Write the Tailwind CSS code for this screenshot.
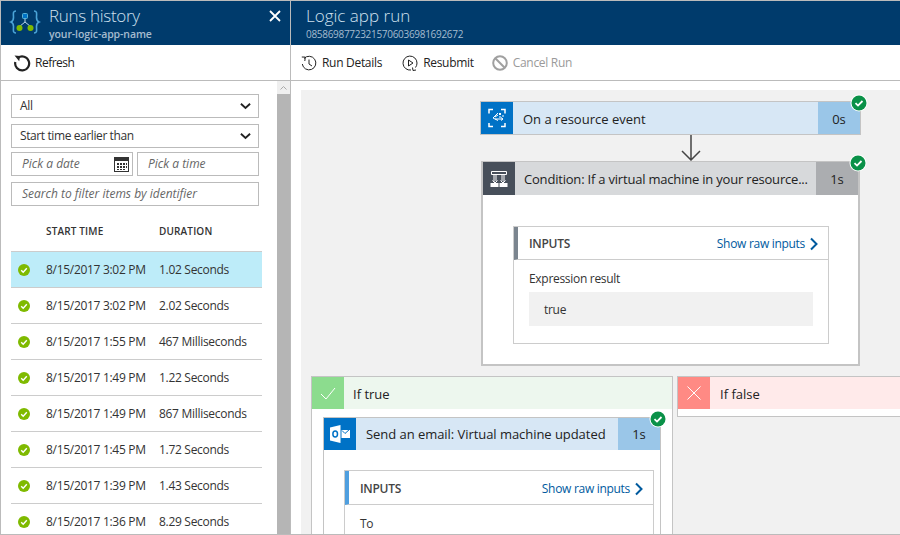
<!DOCTYPE html>
<html lang="en">
<head>
    <meta charset="UTF-8">
    <title>Logic app run</title>
    <script src="https://cdn.jsdelivr.net/npm/@tailwindcss/browser@4"></script>
</head>
<body class="w-[900px] h-[535px] overflow-hidden bg-white font-['Open_Sans',sans-serif] text-[12px] tracking-[-0.3px] text-[#333]">

    <svg class="hidden">
        <symbol id="green-check" viewBox="0 0 14 14">
            <circle cx="7" cy="7" r="6" fill="#7fba00"/>
            <path d="M4.2 7.2l2 2 3.6-4" fill="none" stroke="#fff" stroke-width="1.4"/>
        </symbol>
        <symbol id="badge" viewBox="0 0 18 18">
            <circle cx="9" cy="9" r="8.5" fill="#fff"/>
            <circle cx="9" cy="9" r="7.5" fill="#0a9148"/>
            <path d="M5.5 9.2l2.5 2.4 4.5-4.6" fill="none" stroke="#fff" stroke-width="1.8"/>
        </symbol>
        <symbol id="chevron" viewBox="0 0 10 14">
            <path d="M2 1.5L7.5 7L2 12.5" fill="none" stroke="#005a9e" stroke-width="2"/>
        </symbol>
        <symbol id="select-arrow" viewBox="0 0 12 8">
            <path d="M1 1.5L6 6.2l5-4.7" fill="none" stroke="#222" stroke-width="2"/>
        </symbol>
    </svg>

    <div class="w-[900px] h-[535px] flex border-t border-l border-b border-[#bbb]">

        <!-- Runs history blade -->
        <div class="w-[290px] h-full shrink-0 flex flex-col border-r border-[#bbb]">
            <header class="h-[44px] shrink-0 bg-[#003b6c] flex items-start pl-[8px] pr-[9px]">
                <svg class="w-[32px] h-[24px] mt-[9px] shrink-0" viewBox="0 0 32 24" fill="none">
                    <path d="M7 1C3.500 1 4.500 4 4.500 7.500c0 2.800-.8 3.800-2.500 4.500 1.700.7 2.500 1.700 2.500 4.500C4.500 20 3.500 23 7 23" stroke="#4ba5d8" stroke-width="1.600"/>
                    <path d="M25 1c3.500 0 2.500 3 2.500 6.500 0 2.800.8 3.800 2.500 4.500-1.700.7-2.500 1.700-2.500 4.500C27.500 20 28.500 23 25 23" stroke="#4ba5d8" stroke-width="1.600"/>
                    <path d="M16 8v4l-5.500 4.500M16 12l5.500 4.500" stroke="#b9d6ea" stroke-width="1"/>
                    <rect x="13.500" y="3.500" width="5" height="5" rx="1" fill="#0072c6" stroke="#59b4d9"/>
                    <circle cx="10.500" cy="18" r="3" fill="#7fba00"/>
                    <circle cx="21.500" cy="18" r="3" fill="#7fba00"/>
                </svg>
                <div class="ml-[8px] grow pt-[3px]">
                    <div class="text-[17px] leading-[24px] text-[#cfe0ee] font-light">Runs history</div>
                    <div class="text-[10.5px] leading-[12px] tracking-[-0.1px] font-semibold text-[#a5bccf]">your-logic-app-name</div>
                </div>
                <svg class="w-[12px] h-[12px] mt-[9px]" viewBox="0 0 12 12"><path d="M1 1l10 10M11 1L1 11" stroke="#fff" stroke-width="1.800"/></svg>
            </header>

            <div class="h-[36px] shrink-0 flex items-center pl-[12px] gap-[4px] border-b border-[#bbb] text-[#222]">
                <svg class="w-[18px] h-[18px]" viewBox="0 0 18 18" fill="none">
                    <path d="M5 3.800A7 7 0 1 1 2.300 8" stroke="#222" stroke-width="2.200"/>
                    <path d="M1.500 1.500l5.500.6-.8 5.200z" fill="#222"/>
                </svg>
                <span class="tracking-[-0.5px]">Refresh</span>
            </div>

            <div class="grow min-h-0 flex overflow-hidden">
                <div class="w-[276px] shrink-0 pl-[10px]">
                    <div class="mt-[13px] w-[248px] h-[24px] border border-[#bbb] flex items-center justify-between pl-[8px] pr-[7px]">
                        <span>All</span>
                        <svg class="w-[11px] h-[8px]"><use href="#select-arrow"/></svg>
                    </div>
                    <div class="mt-[6px] w-[248px] h-[24px] border border-[#bbb] flex items-center justify-between pl-[8px] pr-[7px]">
                        <span class="tracking-[-0.4px]">Start time earlier than</span>
                        <svg class="w-[11px] h-[8px]"><use href="#select-arrow"/></svg>
                    </div>
                    <div class="mt-[4px] w-[248px] flex gap-[4px]">
                        <div class="w-[122px] h-[24px] border border-[#bbb] flex items-center justify-between pl-[10px] pr-[3px] italic tracking-normal text-[#666]">
                            <span>Pick a date</span>
                            <svg class="w-[15px] h-[15px]" viewBox="0 0 15 15">
                                <rect x="0.500" y="0.500" width="14" height="14" fill="#fff" stroke="#333"/>
                                <rect x="0" y="0" width="15" height="4" fill="#333"/>
                                <path d="M3 6h2v2H3zM6 6h2v2H6zM9 6h2v2H9zM12 6h1v2h-1zM3 9h2v2H3zM6 9h2v2H6zM9 9h2v2H9zM12 9h1v2h-1zM3 12h2v1H3zM6 12h2v1H6zM9 12h2v1H9z" fill="#333"/>
                            </svg>
                        </div>
                        <div class="w-[122px] h-[24px] border border-[#bbb] flex items-center pl-[10px] italic tracking-normal text-[#666]">Pick a time</div>
                    </div>
                    <div class="mt-[6px] w-[248px] h-[24px] border border-[#bbb] flex items-center pl-[10px] italic tracking-normal text-[#666]">Search to filter items by identifier</div>

                    <div class="mt-[15px] w-[251px] h-[30px] flex text-[10px] tracking-[0.15px] font-semibold text-[#333] items-start pt-[3px]">
                        <span class="ml-[35px] w-[113px]">START TIME</span>
                        <span>DURATION</span>
                    </div>

                    <div class="w-[251px] border-t border-[#ccc]">
                        <div class="h-[36px] flex items-center border-b border-[#ccc] bg-[#bdecf9]">
                            <svg class="w-[14px] h-[14px] ml-[6px]"><use href="#green-check"/></svg>
                            <span class="ml-[15px] w-[113px]">8/15/2017 3:02 PM</span><span>1.02 Seconds</span>
                        </div>
                        <div class="h-[36px] flex items-center border-b border-[#ccc]">
                            <svg class="w-[14px] h-[14px] ml-[6px]"><use href="#green-check"/></svg>
                            <span class="ml-[15px] w-[113px]">8/15/2017 3:02 PM</span><span>2.02 Seconds</span>
                        </div>
                        <div class="h-[36px] flex items-center border-b border-[#ccc]">
                            <svg class="w-[14px] h-[14px] ml-[6px]"><use href="#green-check"/></svg>
                            <span class="ml-[15px] w-[113px]">8/15/2017 1:55 PM</span><span>467 Milliseconds</span>
                        </div>
                        <div class="h-[36px] flex items-center border-b border-[#ccc]">
                            <svg class="w-[14px] h-[14px] ml-[6px]"><use href="#green-check"/></svg>
                            <span class="ml-[15px] w-[113px]">8/15/2017 1:49 PM</span><span>1.22 Seconds</span>
                        </div>
                        <div class="h-[36px] flex items-center border-b border-[#ccc]">
                            <svg class="w-[14px] h-[14px] ml-[6px]"><use href="#green-check"/></svg>
                            <span class="ml-[15px] w-[113px]">8/15/2017 1:49 PM</span><span>867 Milliseconds</span>
                        </div>
                        <div class="h-[36px] flex items-center border-b border-[#ccc]">
                            <svg class="w-[14px] h-[14px] ml-[6px]"><use href="#green-check"/></svg>
                            <span class="ml-[15px] w-[113px]">8/15/2017 1:45 PM</span><span>1.72 Seconds</span>
                        </div>
                        <div class="h-[36px] flex items-center border-b border-[#ccc]">
                            <svg class="w-[14px] h-[14px] ml-[6px]"><use href="#green-check"/></svg>
                            <span class="ml-[15px] w-[113px]">8/15/2017 1:39 PM</span><span>1.43 Seconds</span>
                        </div>
                        <div class="h-[36px] flex items-center">
                            <svg class="w-[14px] h-[14px] ml-[6px]"><use href="#green-check"/></svg>
                            <span class="ml-[15px] w-[113px]">8/15/2017 1:36 PM</span><span>8.29 Seconds</span>
                        </div>
                    </div>
                </div>
                <!-- scrollbar -->
                <div class="w-[13px] shrink-0 bg-[#b5b5b5] flex flex-col">
                    <div class="h-[13px] bg-[#efefef] flex items-center justify-center">
                        <svg class="w-[7px] h-[4px]" viewBox="0 0 7 4"><path d="M.5 3.500l3-3 3 3" fill="none" stroke="#aaa"/></svg>
                    </div>
                </div>
            </div>
        </div>

        <!-- Logic app run blade -->
        <div class="grow min-w-0 flex flex-col">
            <header class="h-[44px] shrink-0 bg-[#003b6c] pl-[15px] pt-[3px]">
                <div class="text-[17px] leading-[24px] tracking-normal text-[#cfe0ee] font-light">Logic app run</div>
                <div class="text-[10px] leading-[12px] text-[#a5bccf]">08586987723215706036981692672</div>
            </header>
            <div class="h-[36px] shrink-0 flex items-center pl-[10px] border-b border-[#bbb] text-[#222]">
                <svg class="w-[16px] h-[16px]" viewBox="0 0 16 16" fill="none" stroke="#222" stroke-width="1">
                    <path d="M3 3.500A6.800 6.800 0 1 1 1.300 9"/>
                    <path d="M.8 2l3.500.1L3.800 6M8 4.500V9l3 2" />
                </svg>
                <span class="ml-[5px]">Run Details</span>
                <svg class="w-[16px] h-[16px] ml-[20px]" viewBox="0 0 16 16" fill="none" stroke="#222" stroke-width="1">
                    <path d="M9 15A7 7 0 1 1 15 8a7 7 0 0 1-1.500 4.500"/>
                    <path d="M6.500 5v6l4.500-3zM10.500 12.500l.5 3 3-.5"/>
                </svg>
                <span class="ml-[5px]">Resubmit</span>
                <svg class="w-[16px] h-[16px] ml-[18px]" viewBox="0 0 16 16" fill="none" stroke="#a0a0a0" stroke-width="2">
                    <circle cx="8" cy="8" r="6.800"/>
                    <path d="M3.300 3.300l9.400 9.400"/>
                </svg>
                <span class="ml-[5px] text-[#9a9a9a]">Cancel Run</span>
            </div>

            <!-- designer canvas -->
            <div class="grow min-h-0 pl-[10px] pt-[9px]">
                <div class="h-full bg-[#f1f1f1] overflow-hidden pt-[11px] text-[13px] tracking-normal">

                    <div class="relative ml-[179px] w-[381px] h-[34px] border border-[#c4c4c4] flex items-stretch bg-[#d7e7f5]">
                        <div class="w-[32px] bg-[#0072c6] flex items-center justify-center">
                            <svg class="w-[20px] h-[20px]" viewBox="0 0 20 20" fill="none" stroke="#fff">
                                <path d="M2 5.500V1.500h4M14 1.500h4v4M18 15v3.500h-4M6 18.500H2V15" stroke-width="1.500"/>
                                <path d="M11 5L6 10l5 2.500M8 9l3-2M8 11h8M14 9.500l2 1.500-2 1.500" stroke-width="1"/>
                                <path d="M12 5h2v2h-2zM12 8.500h2v1h-2zM15 7.500h2v1h-2z" fill="#fff" stroke="none"/>
                            </svg>
                        </div>
                        <div class="grow flex items-center pl-[10px] pt-[3px] text-[#222]">On a resource event</div>
                        <div class="w-[42px] bg-[#9ac6e8] flex items-center justify-center pt-[3px] text-[#222]">0s</div>
                        <svg class="absolute w-[18px] h-[18px] right-[-8px] top-[-8px]"><use href="#badge"/></svg>
                    </div>

                    <svg class="ml-[380px] w-[20px] h-[26px] block" viewBox="0 0 20 26" fill="none" stroke="#444" stroke-width="1.500">
                        <path d="M10 0v25M1 16l9 9 9-9"/>
                    </svg>

                    <div class="relative ml-[180px] w-[379px] h-[205px] border-2 border-t-1 border-[#c4c4c4] bg-white">
                        <div class="h-[33px] flex items-stretch bg-[#d7d9db]">
                            <div class="w-[32px] bg-[#474f5a] flex items-center justify-center">
                                <svg class="w-[18px] h-[18px]" viewBox="0 0 18 18" fill="none" stroke="#fff">
                                    <path d="M1.500 1.500h15v3h-15zM4 4.500V12M6 4.500V11M12 4.500V11M14 4.500V12"/>
                                    <path d="M2.500 10.500L5 13l2.500-2.500M10.500 10.500L13 13l2.500-2.500" stroke-width="1"/>
                                    <rect x="0.500" y="13" width="8" height="4" fill="#fff" stroke="none"/>
                                    <rect x="9.500" y="13" width="8" height="4" fill="#fff" stroke="none"/>
                                </svg>
                            </div>
                            <div class="grow flex items-center pl-[9px] pt-[3px] tracking-[-0.2px] text-[#222] whitespace-nowrap">Condition: If a virtual machine in your resource...</div>
                            <div class="w-[42px] bg-[#abadb0] flex items-center justify-center pt-[3px] text-[#222]">1s</div>
                        </div>
                        <svg class="absolute w-[18px] h-[18px] right-[-9px] top-[-8px]"><use href="#badge"/></svg>

                        <div class="ml-[30px] mt-[31px] w-[316px] h-[118px] border border-[#ccc] text-[12px] tracking-[-0.3px]">
                            <div class="h-[33px] flex items-center border-b border-[#ccc] border-l-[4px] border-l-[#7b858f] pl-[11px] pr-[9px] pt-[1px]">
                                <span class="grow font-semibold text-[#444]">INPUTS</span>
                                <span class="text-[#005a9e]">Show raw inputs</span>
                                <svg class="w-[10px] h-[14px] ml-[4px]"><use href="#chevron"/></svg>
                            </div>
                            <div class="px-[15px] pt-[11px]">
                                <div class="leading-[16px]">Expression result</div>
                                <div class="mt-[5px] h-[34px] bg-[#f1f1f1] flex items-center pl-[15px] pt-[1px]">true</div>
                            </div>
                        </div>
                    </div>

                    <div class="mt-[10px] ml-[10px] flex gap-[4px] items-start">
                        <div class="w-[362px] h-[159px] shrink-0 border border-[#c4c4c4] bg-white">
                            <div class="h-[32px] flex bg-[#edf7ee]">
                                <div class="w-[32px] bg-[#8cdc8e] flex items-center justify-center">
                                    <svg class="w-[16px] h-[13px]" viewBox="0 0 16 13" fill="none" stroke="#fff"><path d="M1 7l5 5L15 1"/></svg>
                                </div>
                                <div class="flex items-center pl-[9px] pt-[3px] text-[#222]">If true</div>
                            </div>
                            <div class="relative ml-[11px] mt-[8px] w-[338px] h-[120px] border border-[#c4c4c4] border-b-0">
                                <div class="h-[32px] flex bg-[#d7e7f5]">
                                    <div class="w-[32px] bg-[#0072c6] flex items-center justify-center">
                                        <svg class="w-[21px] h-[18px]" viewBox="0 0 21 18">
                                            <path d="M0 2.500L10.500 0v18L0 15.500z" fill="#fff"/>
                                            <ellipse cx="5.200" cy="9" rx="2.300" ry="3" fill="none" stroke="#0072c6" stroke-width="1.500"/>
                                            <rect x="11.500" y="5" width="8.500" height="8" fill="#fff"/>
                                            <path d="M12 5.500l3 3L20 4" fill="none" stroke="#0072c6"/>
                                        </svg>
                                    </div>
                                    <div class="grow flex items-center pl-[10px] pt-[2px] tracking-[-0.05px] text-[#222]">Send an email: Virtual machine updated</div>
                                    <div class="w-[42px] bg-[#9ac6e8] flex items-center justify-center pt-[2px] text-[#222]">1s</div>
                                </div>
                                <svg class="absolute w-[18px] h-[18px] right-[-7px] top-[-8px]"><use href="#badge"/></svg>
                                <div class="ml-[20px] mt-[20px] w-[310px] h-[70px] border border-[#ccc] border-b-0 text-[12px] tracking-[-0.3px]">
                                    <div class="h-[34px] flex items-center border-b border-[#ccc] border-l-[4px] border-l-[#4f9fdf] pl-[11px] pr-[9px] pt-[3px]">
                                        <span class="grow font-semibold text-[#444]">INPUTS</span>
                                        <span class="text-[#005a9e]">Show raw inputs</span>
                                        <svg class="w-[10px] h-[14px] ml-[4px]"><use href="#chevron"/></svg>
                                    </div>
                                    <div class="px-[15px] pt-[11px] leading-[16px]">To</div>
                                </div>
                            </div>
                        </div>
                        <div class="w-[240px] shrink-0 h-[41px] border border-[#c4c4c4] bg-white">
                            <div class="h-[32px] flex bg-[#ffeaea]">
                                <div class="w-[32px] bg-[#ff8a84] flex items-center justify-center">
                                    <svg class="w-[14px] h-[14px]" viewBox="0 0 14 14" fill="none" stroke="#fff"><path d="M.5.500l13 13M13.500.500l-13 13"/></svg>
                                </div>
                                <div class="flex items-center pl-[10px] pt-[3px] text-[#222]">If false</div>
                            </div>
                        </div>
                    </div>
                </div>
            </div>
        </div>
    </div>
</body>
</html>
